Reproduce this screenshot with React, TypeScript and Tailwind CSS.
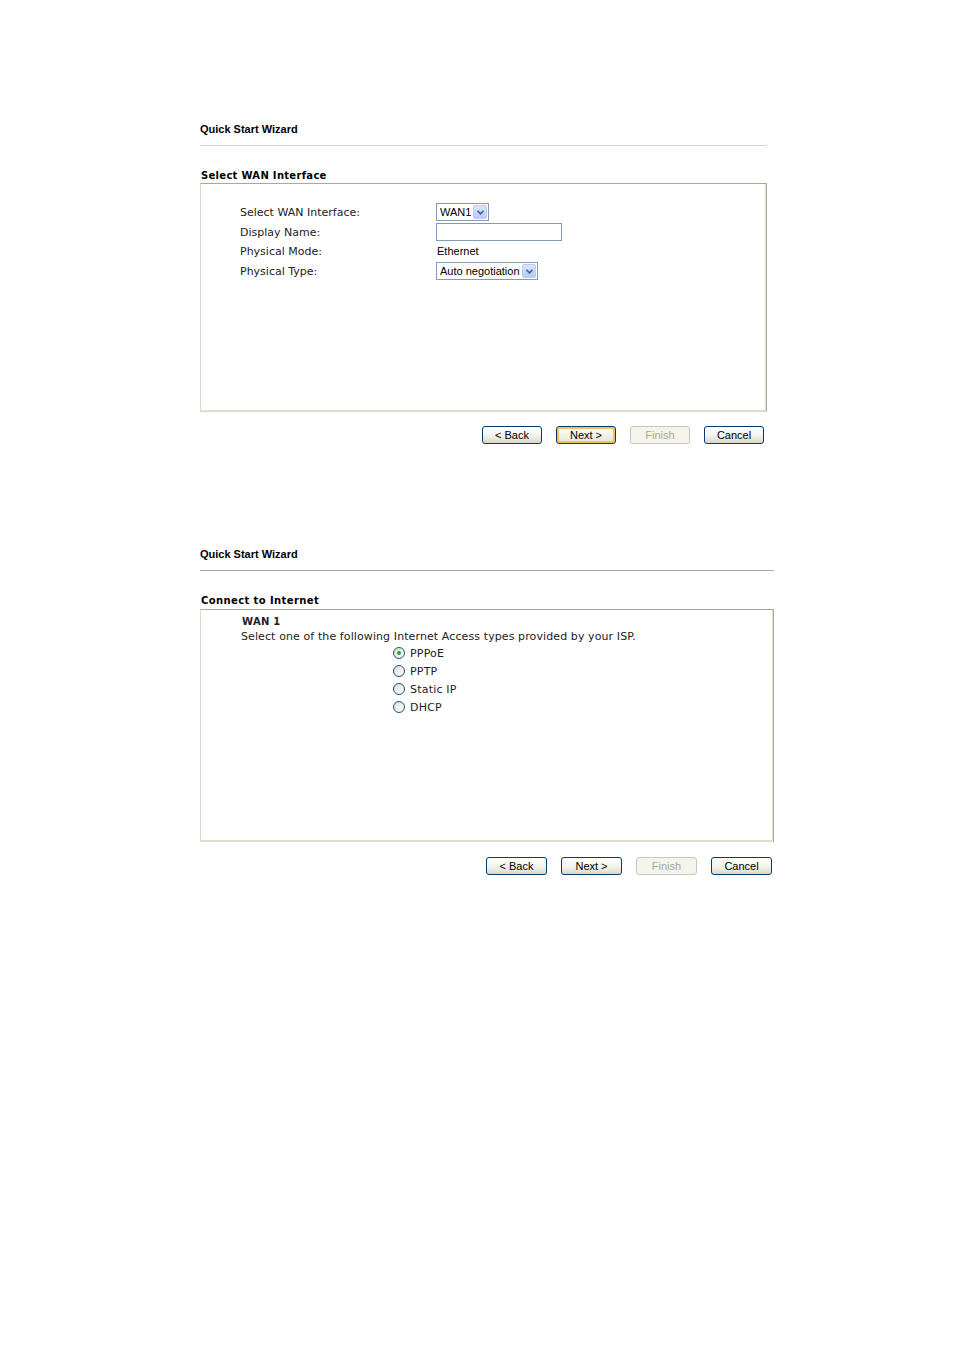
import React from "react";

const verdana = { fontFamily: '"DejaVu Sans", Verdana, sans-serif' } as React.CSSProperties;

function Btn({ label, variant, w }: { label: string; variant?: "focus" | "disabled"; w: string }) {
  const base = `${w} h-[18px] rounded-[3px] border flex items-center justify-center text-[11px] leading-none font-['Liberation_Sans',Arial,sans-serif]`;
  if (variant === "disabled")
    return <div className={`${base} border-[#c9c7ba] bg-[#f5f4ea] text-[#aca899]`}>{label}</div>;
  if (variant === "focus")
    return (
      <div
        className={`${base} border-[#003c74] bg-gradient-to-b from-white to-[#e6e3d6] text-black shadow-[inset_0_0_0_2px_#f6bf5a]`}
      >
        {label}
      </div>
    );
  return (
    <div className={`${base} border-[#003c74] bg-gradient-to-b from-white via-[#f5f4ef] to-[#dcd8cb] text-black`}>
      {label}
    </div>
  );
}

function Select({ text, width }: { text: string; width: string }) {
  return (
    <div className={`${width} h-[18px] border border-[#7f9db9] bg-white flex items-center justify-between pl-[3px] pr-[1px]`}>
      <span className="text-[11px] leading-none text-black font-['Liberation_Sans',Arial,sans-serif]">{text}</span>
      <span className="w-[14px] h-[14px] rounded-[2px] border border-[#b9cbf3] bg-gradient-to-b from-[#dbe6fe] to-[#b4c9f8] flex items-center justify-center">
        <svg width="7" height="5" viewBox="0 0 7 5">
          <path d="M0.5 0.8 L3.5 3.8 L6.5 0.8" stroke="#4d6185" strokeWidth="1.6" fill="none" />
        </svg>
      </span>
    </div>
  );
}

function Radio({ checked, label }: { checked?: boolean; label: string }) {
  return (
    <div className="h-[18px] flex items-center">
      <span className="w-[12px] h-[12px] rounded-full border border-[#1c5180] bg-gradient-to-br from-[#dcdcd6] to-white flex items-center justify-center">
        {checked && <span className="w-[4px] h-[4px] rounded-full bg-[#2ea52e]" />}
      </span>
      <span className="ml-[5px] text-[11px] leading-none text-[#222] tracking-[0.2px]" style={verdana}>
        {label}
      </span>
    </div>
  );
}

function Box({ height, children }: { height: string; children: React.ReactNode }) {
  return (
    <div className={`${height} border border-t-[#aca899] border-l-[#dcd9ca] border-r-[#aca899] border-b-[#dcd9ca] bg-white`}>
      <div className="h-full border-r border-b border-r-[#e4e1d4] border-b-[#e4e1d4]">{children}</div>
    </div>
  );
}

const label = "w-[196px] text-[11px] leading-none text-[#222]";

export default function App() {
  return (
    <div className="min-h-[1350px] bg-white text-black">
      {/* Section 1 */}
      <div className="pt-[123px] pl-[200px] w-[767px]">
        <div className="text-[11px] leading-[12px] font-bold font-['Liberation_Sans',Arial,sans-serif]">
          Quick Start Wizard
        </div>
        <div className="mt-[10px] h-px bg-[#d6d4cd]" />
        <div className="mt-[24px] text-[10px] leading-[12px] font-bold pl-[1px] tracking-[0.3px]" style={verdana}>
          Select WAN Interface
        </div>
        <div className="mt-[1px]">
          <Box height="h-[229px]">
            <div className="pt-[18px] pl-[39px]">
              <div className="flex h-[20px] items-center">
                <div className={label} style={verdana}>Select WAN Interface:</div>
                <Select text="WAN1" width="w-[53px]" />
              </div>
              <div className="flex h-[20px] items-center">
                <div className={label} style={verdana}>Display Name:</div>
                <div className="w-[126px] h-[18px] border border-[#7f9db9] bg-white" />
              </div>
              <div className="flex h-[19px] items-center">
                <div className={label} style={verdana}>Physical Mode:</div>
                <div className="pl-[1px] text-[11px] leading-none text-black font-['Liberation_Sans',Arial,sans-serif]">Ethernet</div>
              </div>
              <div className="flex h-[20px] items-center">
                <div className={label} style={verdana}>Physical Type:</div>
                <Select text="Auto negotiation" width="w-[102px]" />
              </div>
            </div>
          </Box>
        </div>
        <div className="mt-[14px] flex justify-end gap-[14px] pr-[3px]">
          <Btn w="w-[60px]" label="< Back" />
          <Btn w="w-[60px]" label="Next >" variant="focus" />
          <Btn w="w-[60px]" label="Finish" variant="disabled" />
          <Btn w="w-[60px]" label="Cancel" />
        </div>
      </div>

      {/* Section 2 */}
      <div className="mt-[104px] pl-[200px] w-[774px]">
        <div className="text-[11px] leading-[12px] font-bold font-['Liberation_Sans',Arial,sans-serif]">
          Quick Start Wizard
        </div>
        <div className="mt-[10px] h-px bg-[#aca899]" />
        <div className="mt-[24px] text-[10px] leading-[12px] font-bold pl-[1px] tracking-[0.4px]" style={verdana}>
          Connect to Internet
        </div>
        <div className="mt-[2px]">
          <Box height="h-[233px]">
            <div className="pt-[4px] pl-[40px] text-[11px] leading-[15px] text-[#222]" style={verdana}>
              <div className="font-bold text-[10px] pl-[1px] tracking-[0.3px]">WAN 1</div>
              <div className="tracking-[0.1px]">Select one of the following Internet Access types provided by your ISP.</div>
            </div>
            <div className="pl-[192px]">
              <Radio checked label="PPPoE" />
              <Radio label="PPTP" />
              <Radio label="Static IP" />
              <Radio label="DHCP" />
            </div>
          </Box>
        </div>
        <div className="mt-[15px] flex justify-end gap-[14px] pr-[2px]">
          <Btn w="w-[61px]" label="< Back" />
          <Btn w="w-[61px]" label="Next >" />
          <Btn w="w-[61px]" label="Finish" variant="disabled" />
          <Btn w="w-[61px]" label="Cancel" />
        </div>
      </div>
    </div>
  );
}
